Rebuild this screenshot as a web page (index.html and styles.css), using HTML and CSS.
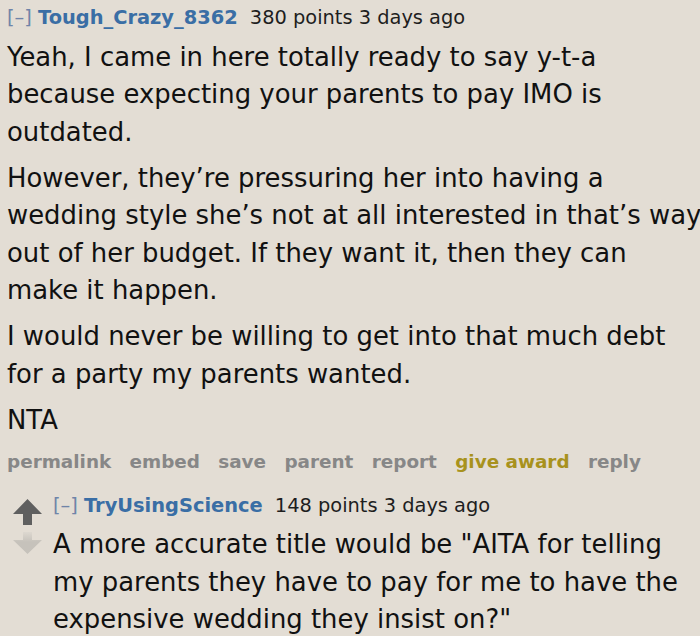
FILE: index.html
```html
<!DOCTYPE html>
<html>
<head>
<meta charset="utf-8">
<link rel="stylesheet" href="styles.css">
</head>
<body>
<div class="comment">
  <div class="tagline">
    <span class="expand">[&ndash;]</span>
    <span class="author">Tough_Crazy_8362</span>
    <span class="score">380 points 3 days ago</span>
  </div>
  <div class="body">
    <p>Yeah, I came in here totally ready to say y-t-a because expecting your parents to pay IMO is outdated.</p>
    <p>However, they’re pressuring her into having a wedding style she’s not at all interested in that’s way out of her budget. If they want it, then they can make it happen.</p>
    <p>I would never be willing to get into that much debt for a party my parents wanted.</p>
    <p>NTA</p>
  </div>
  <ul class="buttons">
    <li>permalink</li>
    <li>embed</li>
    <li>save</li>
    <li>parent</li>
    <li>report</li>
    <li class="award">give award</li>
    <li>reply</li>
  </ul>
  <div class="child">
    <div class="votes">
      <svg class="arrows" width="32" height="60" viewBox="0 0 32 60">
        <defs>
          <linearGradient id="fade" x1="0" y1="0" x2="0" y2="1">
            <stop offset="0" stop-color="#ddd8d0"/>
            <stop offset="0.45" stop-color="#c6c2bb"/>
            <stop offset="1" stop-color="#c6c2bb"/>
          </linearGradient>
        </defs>
        <path class="up" d="M15.5 2 L30 17 L20 17 L20 28 L11 28 L11 17 L1 17 Z"/>
        <path d="M11 35 L20 35 L20 43 L30 43 L15.5 57 L1 43 L11 43 Z" fill="url(#fade)"/>
      </svg>
    </div>
    <div class="entry">
      <div class="tagline">
        <span class="expand">[&ndash;]</span>
        <span class="author">TryUsingScience</span>
        <span class="score">148 points 3 days ago</span>
      </div>
      <div class="body">
        <p>A more accurate title would be "AITA for telling my parents they have to pay for me to have the expensive wedding they insist on?"</p>
      </div>
    </div>
  </div>
</div>
</body>
</html>
```
FILE: styles.css
```css
html, body {
  margin: 0;
  padding: 0;
  background: #e3ddd4;
}
body {
  font-family: "DejaVu Sans", Verdana, sans-serif;
  color: #111;
  overflow: hidden;
}
.comment {
  padding: 4px 0 0 7px;
}
.tagline {
  font-size: 19.4px;
  line-height: 28px;
  color: #1e1e1e;
  margin-bottom: 6.5px;
  white-space: nowrap;
}
.expand {
  color: #6f84a8;
}
.author {
  color: #3a6ea5;
  font-weight: bold;
  margin-right: 6px;
}
.body {
  font-size: 25.9px;
  line-height: 37.5px;
  width: 697px;
}
.body p {
  margin: 0 0 8.5px 0;
}
.buttons {
  list-style: none;
  margin: -2px 0 0 0;
  padding: 0;
  display: flex;
  gap: 18.3px;
  font-size: 18.4px;
  font-weight: bold;
  color: #878787;
  line-height: 31px;
}
.buttons .award {
  color: #a8921d;
}
.child {
  display: flex;
  margin-top: 15px;
}
.votes {
  width: 46px;
}
.arrows {
  display: block;
  margin: 5px 0 0 5px;
}
.arrows .up {
  fill: #5f5f5f;
}
.child .body {
  width: 640px;
}
```
